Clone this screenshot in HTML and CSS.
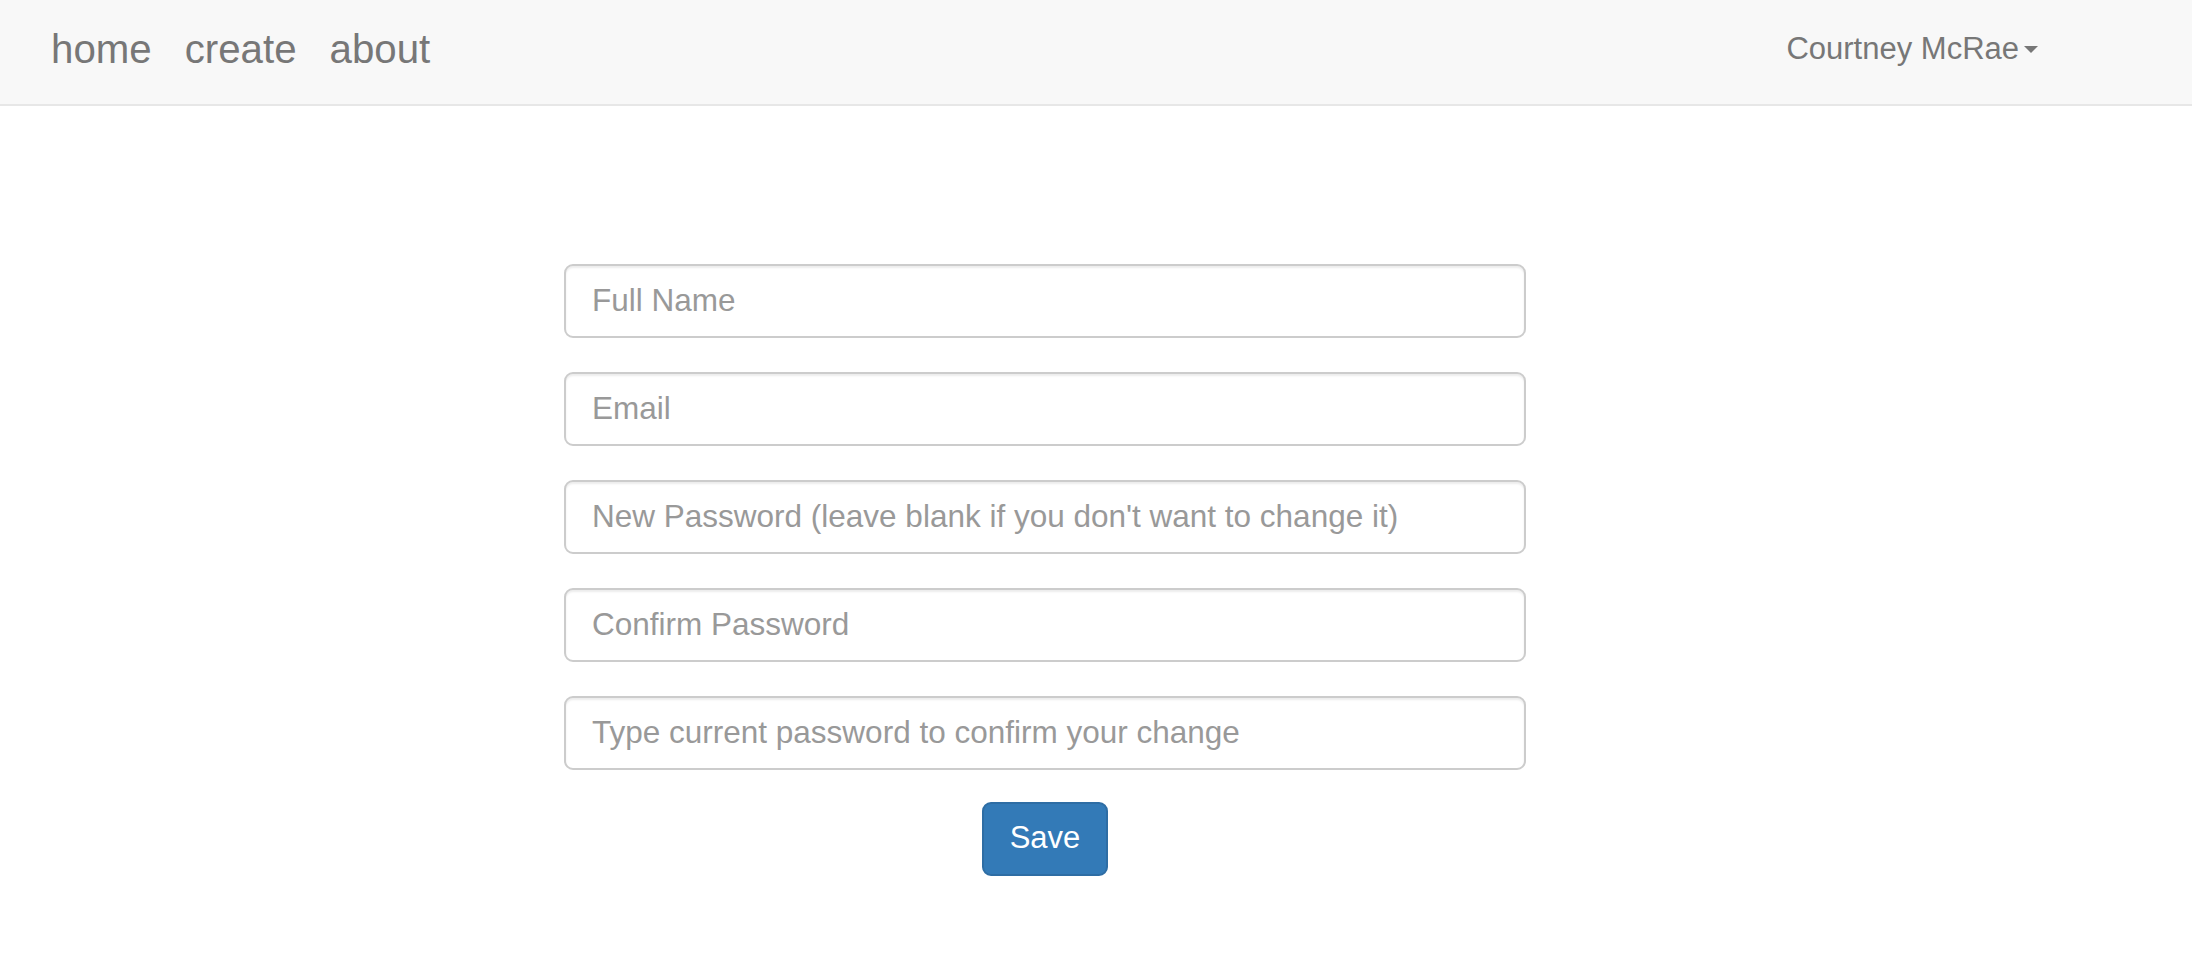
FILE: index.html
```html
<!DOCTYPE html>
<html lang="en">
<head>
<meta charset="utf-8">
<title>Account</title>
<link rel="stylesheet" href="styles.css">
</head>
<body>
<nav class="navbar">
  <ul class="nav-left">
    <li><a href="#">home</a></li>
    <li><a href="#">create</a></li>
    <li><a href="#">about</a></li>
  </ul>
  <div class="nav-right">
    <a href="#" class="user">Courtney McRae<span class="caret"></span></a>
  </div>
</nav>
<main class="page">
  <form class="account-form">
    <input class="field" type="text" placeholder="Full Name">
    <input class="field" type="email" placeholder="Email">
    <input class="field" type="password" placeholder="New Password (leave blank if you don't want to change it)">
    <input class="field" type="password" placeholder="Confirm Password">
    <input class="field" type="password" placeholder="Type current password to confirm your change">
    <button class="btn-save" type="button">Save</button>
  </form>
</main>
</body>
</html>
```
FILE: styles.css
```css
* { box-sizing: border-box; }
html, body {
  margin: 0;
  padding: 0;
  background: #fff;
  font-family: "Liberation Sans", Arial, Helvetica, sans-serif;
}
.navbar {
  height: 106px;
  background: #f8f8f8;
  border-bottom: 2px solid #e7e7e7;
  display: flex;
  justify-content: space-between;
  align-items: flex-start;
}
.nav-left {
  list-style: none;
  margin: 0;
  padding: 30px 0 0 51px;
  display: flex;
  gap: 33px;
}
.nav-left a {
  font-size: 40.25px;
  line-height: 40px;
  color: #777;
  text-decoration: none;
  display: block;
}
.nav-right {
  padding: 33px 154px 0 0;
}
.user {
  font-size: 31px;
  line-height: 31px;
  color: #777;
  text-decoration: none;
  display: flex;
  align-items: center;
}
.caret {
  display: inline-block;
  width: 0;
  height: 0;
  margin-left: 5px;
  margin-top: 2px;
  border-top: 7px solid #777;
  border-left: 7px solid transparent;
  border-right: 7px solid transparent;
}
.page {
  display: flex;
  justify-content: center;
  padding: 158px 102px 0 0;
}
.account-form {
  width: 962px;
  display: flex;
  flex-direction: column;
  align-items: center;
  gap: 34px;
}
.field {
  width: 100%;
  height: 74px;
  padding: 0 26px 2px;
  font-family: "Liberation Sans", Arial, Helvetica, sans-serif;
  font-size: 31.5px;
  color: #555;
  background: #fff;
  border: 2px solid #ccc;
  border-radius: 9px;
  box-shadow: inset 0 2px 2px rgba(0, 0, 0, 0.075);
  outline: none;
}
.field::placeholder { color: #999; opacity: 1; }
.btn-save {
  margin-top: -2px;
  width: 126px;
  height: 74px;
  padding: 0 0 2px;
  font-family: "Liberation Sans", Arial, Helvetica, sans-serif;
  font-size: 31px;
  color: #fff;
  background: #337ab7;
  border: 2px solid #2e6da4;
  border-radius: 9px;
  cursor: pointer;
}
```
